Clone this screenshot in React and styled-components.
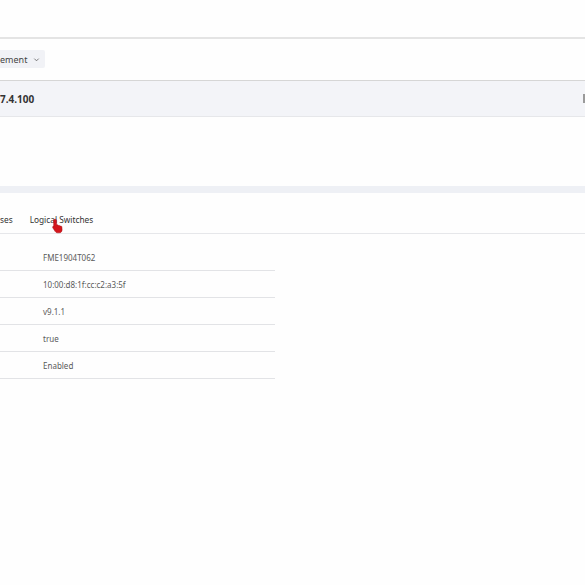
import React from "react";
import styled, { createGlobalStyle } from "styled-components";

const GlobalStyle = createGlobalStyle`
  html, body {
    margin: 0;
    padding: 0;
    background: #fefefe;
  }
  body {
    font-family: "Noto Sans", "Liberation Sans", sans-serif;
    color: #333;
    overflow: hidden;
  }
`;

const ROWS = [
  "FME1904T062",
  "10:00:d8:1f:cc:c2:a3:5f",
  "v9.1.1",
  "true",
  "Enabled",
];

const App = () => {
  return (
    <>
      <GlobalStyle />
      <Page>
        <TopBar />
        <Toolbar>
          <MenuButton>
            <span>ement</span>
            <Chevron viewBox="0 0 8 8">
              <path d="M1.5 3 L4 5.5 L6.5 3" />
            </Chevron>
          </MenuButton>
        </Toolbar>
        <HeaderBar>
          <HeaderTitle>7.4.100</HeaderTitle>
          <EdgeMark />
        </HeaderBar>
        <Spacer />
        <Band />
        <Tabs>
          <Tab>ses</Tab>
          <Tab>Logical Switches</Tab>
          <Cursor viewBox="0 0 12 14">
            <path d="M3.5 1 C4.3 1 4.8 1.5 4.8 2.3 L4.8 6 L5.4 6 C6 6 6.5 6.3 6.6 6.7 C7 6.4 7.8 6.5 8.1 7 C8.6 6.8 9.3 7.1 9.4 7.7 L9.6 10 C9.7 11.8 8.6 13 7 13 L5.6 13 C4.6 13 3.9 12.5 3.4 11.7 L1.4 8.5 C1.1 8 1.3 7.4 1.8 7.2 C2.2 7 2.6 7.2 2.2 7.6 L2.2 2.3 C2.2 1.5 2.7 1 3.5 1 Z" />
          </Cursor>
        </Tabs>
        <Table>
          {ROWS.map((value) => (
            <Row key={value}>
              <Value>{value}</Value>
            </Row>
          ))}
        </Table>
      </Page>
    </>
  );
};

export default App;

const Page = styled.div`
  width: 585px;
  height: 585px;
  display: flex;
  flex-direction: column;
  background: #fefefe;
`;

const TopBar = styled.div`
  height: 37px;
  border-bottom: 2px solid #e4e4e4;
  flex-shrink: 0;
`;

const Toolbar = styled.div`
  height: 41px;
  display: flex;
  align-items: flex-start;
  padding-top: 11px;
  box-sizing: border-box;
  flex-shrink: 0;
`;

const MenuButton = styled.div`
  height: 18px;
  width: 45px;
  display: flex;
  align-items: center;
  gap: 6px;
  background: #f1f2f6;
  font-size: 9px;
  color: #444;
  border-radius: 0 2px 2px 0;
  box-sizing: border-box;
`;

const Chevron = styled.svg`
  width: 7px;
  height: 7px;
  fill: none;
  stroke: #666;
  stroke-width: 1;
`;

const HeaderBar = styled.div`
  height: 37px;
  display: flex;
  align-items: center;
  justify-content: space-between;
  background: #f3f4f8;
  border-top: 1px solid #d6d6d6;
  border-bottom: 1px solid #e6e7ea;
  box-sizing: border-box;
  flex-shrink: 0;
`;

const HeaderTitle = styled.span`
  font-size: 10px;
  font-weight: 700;
  color: #333;
`;

const EdgeMark = styled.span`
  width: 2px;
  height: 9px;
  background: #9a9a9a;
`;

const Spacer = styled.div`
  height: 69px;
  flex-shrink: 0;
`;

const Band = styled.div`
  height: 7px;
  background: #eef0f5;
  flex-shrink: 0;
`;

const Tabs = styled.div`
  position: relative;
  height: 41px;
  display: flex;
  align-items: flex-end;
  gap: 17px;
  padding-bottom: 7px;
  border-bottom: 1px solid #e6e7ea;
  box-sizing: border-box;
  flex-shrink: 0;
`;

const Tab = styled.span`
  font-size: 8.3px;
  color: #333;
  line-height: 12px;
`;

const Cursor = styled.svg`
  position: absolute;
  left: 51px;
  top: 25px;
  width: 14px;
  height: 16px;
  fill: #d4161c;
  stroke: #a00d12;
  stroke-width: 0.4;
`;

const Table = styled.div`
  width: 275px;
  margin-top: 10px;
  display: flex;
  flex-direction: column;
`;

const Row = styled.div`
  height: 27px;
  display: flex;
  align-items: center;
  border-bottom: 1px solid #e2e3e6;
  box-sizing: border-box;
`;

const Value = styled.span`
  padding-left: 43px;
  font-size: 8px;
  color: #5a5a5a;
`;
